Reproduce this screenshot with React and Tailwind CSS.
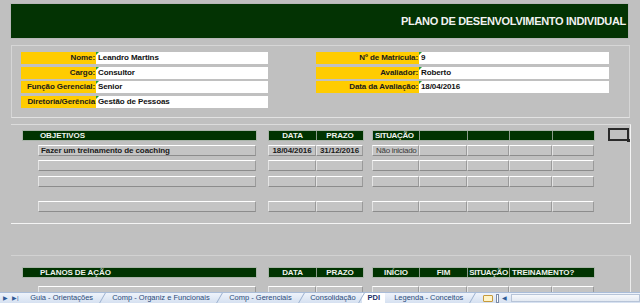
import React from 'react'

const font = "font-['Liberation_Sans',Arial,sans-serif]"

function Marker() {
  return (
    <span className="absolute left-0 top-0 h-0 w-0 border-r-[3px] border-t-[3px] border-r-transparent border-t-[#1e9e3a]" />
  )
}

function InfoRow({ label, value, labelW, valueW }) {
  return (
    <div className="flex h-[12px]">
      <div
        className="flex items-center justify-end whitespace-nowrap bg-[#ffcc00] pr-[1px] text-[8px] font-bold leading-none tracking-[-0.1px] text-[#1a1a1a]"
        style={{ width: labelW }}
      >
        {label}
      </div>
      <div
        className="relative flex items-center whitespace-nowrap bg-white pl-[2px] text-[8px] font-bold leading-none tracking-[-0.1px] text-[#111]"
        style={{ width: valueW }}
      >
        <Marker />
        {value}
      </div>
    </div>
  )
}

function HeadCell({ w, children, align = 'center', pad = 0, tight = false }) {
  return (
    <div
      className={`flex h-full items-center overflow-hidden whitespace-nowrap border-l border-[#8a9a8a] bg-[#003300] text-[8px] font-bold leading-none text-[#eef2ee] first:border-l-0 ${
        tight ? 'tracking-[-0.4px]' : 'tracking-[-0.1px]'
      } ${align === 'left' ? 'justify-start' : 'justify-center'}`}
      style={{ width: w, paddingLeft: pad }}
    >
      {children}
    </div>
  )
}

function Cell({ w, children, bold = true, align = 'left', pad = 2 }) {
  return (
    <div
      className={`flex h-full items-center overflow-hidden whitespace-nowrap border-b border-l border-r border-t border-b-[#8c8c8c] border-l-[#e4e4e4] border-r-[#9a9a9a] border-t-white bg-[#c4c4c4] text-[8px] leading-none ${
        bold ? 'font-bold tracking-[-0.1px] text-[#1a1a1a]' : 'font-normal tracking-[-0.3px] text-[#3a3a3a]'
      } ${align === 'center' ? 'justify-center' : 'justify-start'}`}
      style={{ width: w, paddingLeft: align === 'center' ? 0 : pad }}
    >
      {children}
    </div>
  )
}

const sitCols = [47, 48, 42, 43, 42]

function ObjRow({ text, data, prazo, sit, className = '' }) {
  return (
    <div className={`flex h-[11px] ${className}`}>
      <div className="w-[27px]" />
      <Cell w={218} pad={2}>{text}</Cell>
      <div className="w-[12px]" />
      <Cell w={48} align="center">{data}</Cell>
      <Cell w={47} align="center">{prazo}</Cell>
      <div className="w-[9px]" />
      {sitCols.map((w, i) => (
        <Cell key={i} w={w} bold={false} pad={3}>
          {i === 0 ? sit : ''}
        </Cell>
      ))}
    </div>
  )
}

function Tabs() {
  const tabs = [
    'Guia - Orientações',
    'Comp - Organiz e Funcionais',
    'Comp - Gerenciais',
    'Consolidação',
    'PDI',
    'Legenda - Conceitos',
  ]
  return (
    <div className="flex h-[11px] shrink-0 items-stretch border-t border-[#a9bcd8] bg-gradient-to-b from-[#eef3fb] to-[#d6e1f1] text-[7.5px] leading-none text-[#2a4a7a]">
      <div className="flex w-[21px] items-center gap-[4px] pl-[3px] text-[6px] text-[#2f5a96]">
        <span>▶</span>
        <span>▶|</span>
      </div>
      {tabs.map((t) => (
        <div
          key={t}
          className={`flex items-center whitespace-nowrap ${
            t === 'PDI'
              ? 'bg-white px-[5px] font-bold text-[#1a2f6a]'
              : t === 'Consolidação'
              ? 'skew-x-[-30deg] border-r border-[#9bb0cf] pl-[9px] pr-[6px]'
              : 'skew-x-[-30deg] border-r border-[#9bb0cf] px-[9px]'
          }`}
        >
          <span className={t === 'PDI' ? '' : 'skew-x-[30deg]'}>{t}</span>
        </div>
      ))}
      <div className="ml-[10px] flex items-center">
        <span className="block h-[7px] w-[10px] rounded-[1px] border border-[#c79a3b] bg-[#fff4c8]" />
      </div>
      <div className="ml-[3px] flex items-center">
        <span className="block h-[9px] w-[3px] border border-[#7b8ba8] bg-white" />
      </div>
      <div className="ml-[3px] flex items-center text-[6px] text-[#2f5a96]">◀</div>
      <div className="my-[1px] ml-[4px] flex-1 border border-[#b7c4d8] bg-gradient-to-b from-[#f7f9fc] to-[#e3e9f2]" />
    </div>
  )
}

export default function App() {
  return (
    <div className={`flex h-[303px] w-[640px] flex-col overflow-hidden bg-[#c0c0c0] ${font}`}>
      <div className="flex-1 overflow-hidden">
        {/* title */}
        <div className="ml-[11px] mt-[4px] flex h-[34px] w-[617px] items-center justify-end bg-[#033303] pr-[2px] shadow-[0_0_0_1px_#b8b8b8]">
          <span className="text-[11px] font-bold leading-none tracking-[-0.3px] text-[#f2f2f2]">
            PLANO DE DESENVOLVIMENTO INDIVIDUAL
          </span>
        </div>

        {/* info */}
        <div className="ml-[11px] mt-[7px] h-[73px] w-[619px] border-b border-l border-r border-t border-[#d6d6d6] border-b-[#e2e2e2]">
          <div className="flex pt-[6px]">
            <div className="ml-[9px] flex flex-col gap-[2.5px]">
              <InfoRow label="Nome:" value="Leandro Martins" labelW={75} valueW={172} />
              <InfoRow label="Cargo:" value="Consultor" labelW={75} valueW={172} />
              <InfoRow label="Função Gerencial:" value="Senior" labelW={75} valueW={172} />
              <InfoRow label="Diretoria/Gerência" value="Gestão de Pessoas" labelW={75} valueW={172} />
            </div>
            <div className="ml-[48px] flex flex-col gap-[2.5px]">
              <InfoRow label="Nº de Matrícula:" value="9" labelW={103} valueW={190} />
              <InfoRow label="Avaliador:" value="Roberto" labelW={103} valueW={190} />
              <InfoRow label="Data da Avaliação:" value="18/04/2016" labelW={103} valueW={190} />
            </div>
          </div>
        </div>

        {/* objetivos */}
        <div className="ml-[11px] mt-[6px] h-[100px] w-[620px] border-b border-r border-t border-[#dcdcdc] border-b-[#f4f4f4] border-r-[#f4f4f4]">
          <div className="mt-[5px] flex h-[11px] items-start">
            <div className="ml-[11px] flex h-[11px] border border-[#aab4aa]">
              <HeadCell w={233} align="left" pad={17}>OBJETIVOS</HeadCell>
            </div>
            <div className="ml-[11px] flex h-[11px] border border-[#aab4aa]">
              <HeadCell w={47}>DATA</HeadCell>
              <HeadCell w={47}>PRAZO</HeadCell>
            </div>
            <div className="ml-[8px] flex h-[11px] border border-[#aab4aa]">
              <HeadCell w={46} align="left" pad={2} tight>SITUAÇÃO</HeadCell>
              <HeadCell w={48} />
              <HeadCell w={42} />
              <HeadCell w={43} />
              <HeadCell w={42} />
            </div>
            <div className="relative ml-[13px] mt-[-2px] h-[13px] w-[21px] border-2 border-[#2a2a2a]">
              <span className="absolute -bottom-[3px] -right-[3px] h-[3px] w-[3px] bg-[#2a2a2a]" />
            </div>
          </div>
          <ObjRow className="mt-[4px]" text="Fazer um treinamento de coaching" data="18/04/2016" prazo="31/12/2016" sit="Não iniciado" />
          <ObjRow className="mt-[4px]" />
          <ObjRow className="mt-[5px]" />
          <ObjRow className="mt-[14px]" />
        </div>

        {/* planos de ação */}
        <div className="ml-[11px] mt-[31px] h-[60px] w-[620px] border-r border-t border-[#d2d2d2] border-r-[#ececec]">
          <div className="mt-[11px] flex h-[11px] items-start">
            <div className="ml-[11px] flex h-[11px] border border-[#aab4aa]">
              <HeadCell w={233} align="left" pad={17}>PLANOS DE AÇÃO</HeadCell>
            </div>
            <div className="ml-[11px] flex h-[11px] border border-[#aab4aa]">
              <HeadCell w={47}>DATA</HeadCell>
              <HeadCell w={47}>PRAZO</HeadCell>
            </div>
            <div className="ml-[8px] flex h-[11px] border border-[#aab4aa]">
              <HeadCell w={46}>INÍCIO</HeadCell>
              <HeadCell w={48}>FIM</HeadCell>
              <HeadCell w={42} tight>SITUAÇÃO</HeadCell>
              <HeadCell w={85} align="left" pad={2}>TREINAMENTO?</HeadCell>
            </div>
          </div>
          <ObjRow className="mt-[8px]" />
        </div>
      </div>
      <Tabs />
    </div>
  )
}
